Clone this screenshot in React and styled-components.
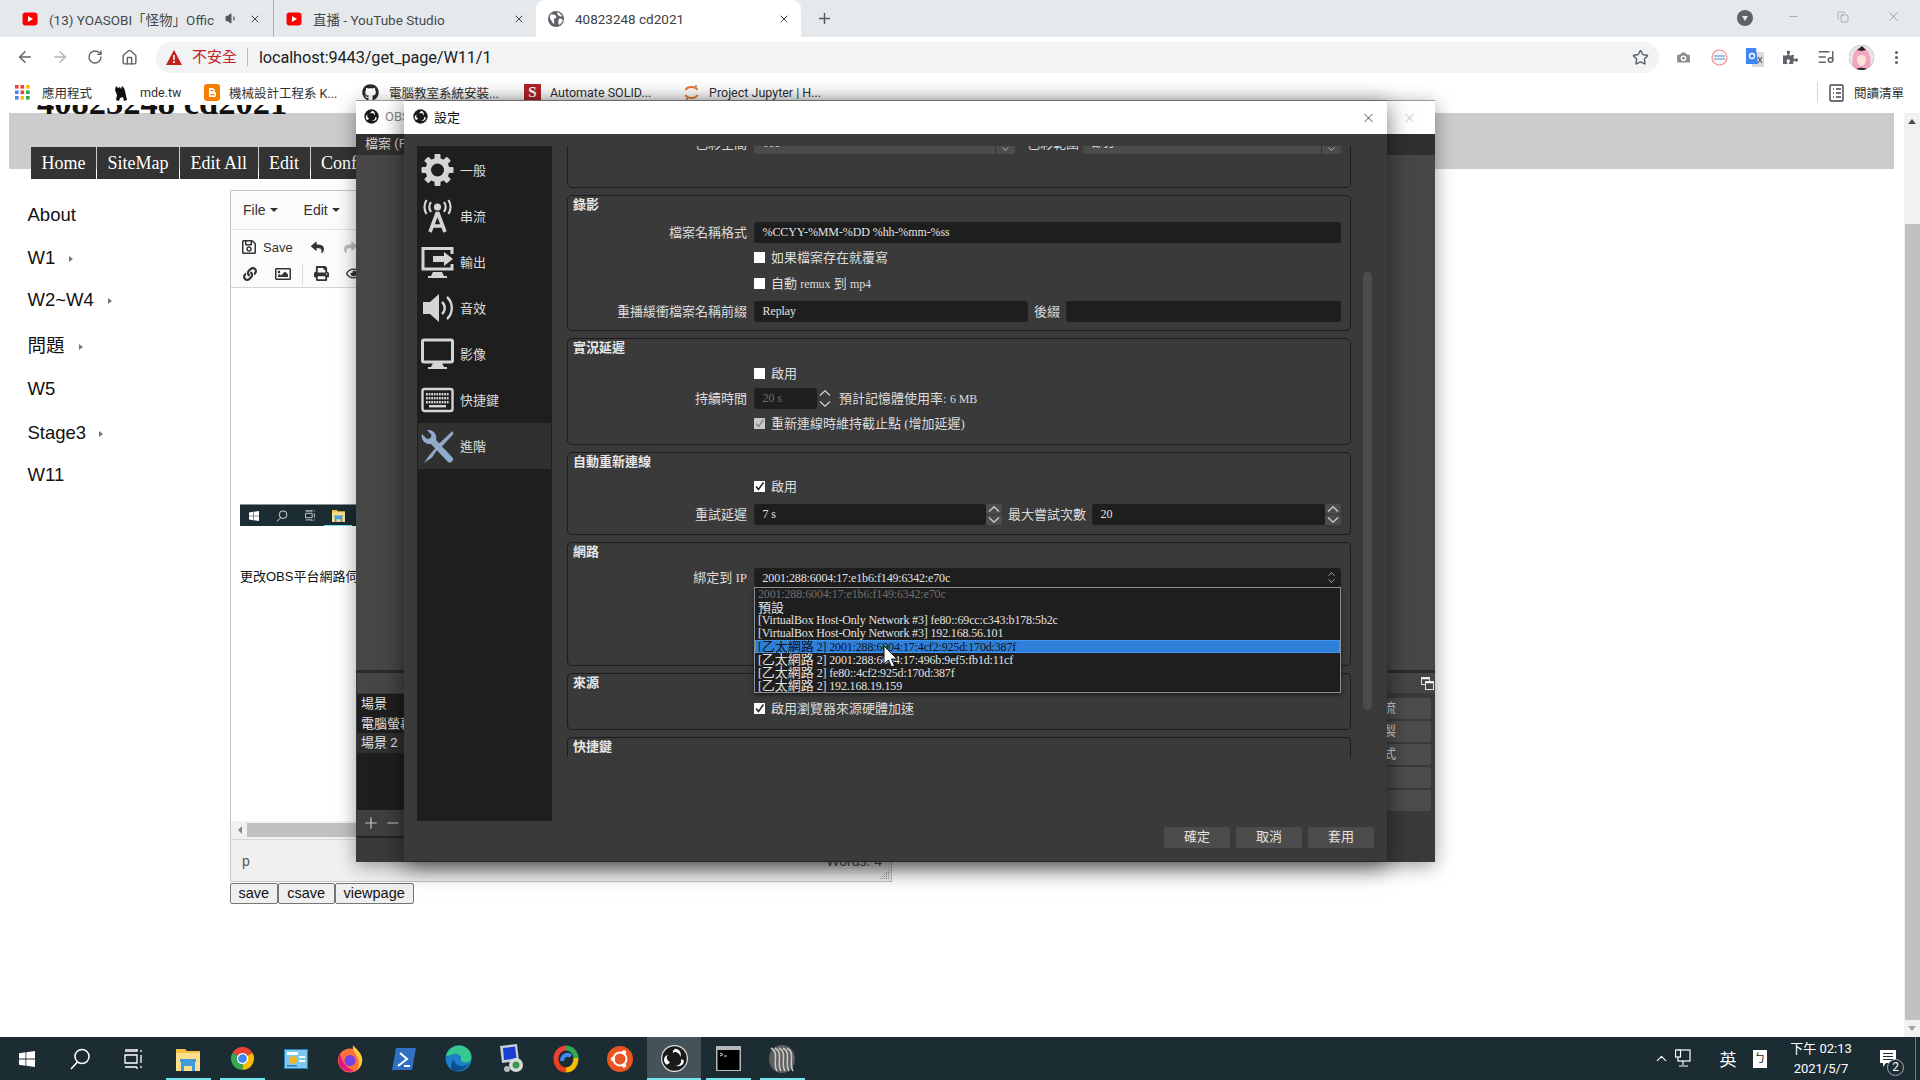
import React from "react";
import styled, { createGlobalStyle } from "styled-components";
import { ArrowLeft, ArrowRight, RotateCw, House, Star, Camera, ListMusic, EllipsisVertical, Plus, X, Minus, Copy, ChevronUp, Volume1 } from "lucide-react";
import { FaRegSave, FaReply, FaShare, FaLink, FaRegImage, FaPrint, FaRegEye, FaGithub, FaPuzzlePiece } from "react-icons/fa";

const SERIF = `"Liberation Serif", "Noto Sans CJK TC", serif`;
const UI = `Roboto, "Noto Sans CJK TC", sans-serif`;
const ARIAL = `"Liberation Sans", "Noto Sans CJK TC", sans-serif`;

const Global = createGlobalStyle`
  html, body { margin: 0; padding: 0; background: #fff; overflow: hidden; }
  * { box-sizing: border-box; }
`;

const Screen = styled.div`
  position: relative; width: 1920px; height: 1080px; overflow: hidden;
  display: flex; flex-direction: column; font-family: ${UI}; background: #fff;
`;

/* ---------- browser chrome ---------- */
const TabStrip = styled.div`
  height: 37px; flex: none; background: #e6e9ec; display: flex; align-items: stretch; padding-left: 10px;
`;
const Tab = styled.div`
  width: ${(p) => p.$w}px; flex: none; display: flex; align-items: center; gap: 11px;
  padding: 0 11px 0 12px; font-size: 13.5px; color: ${(p) => (p.$active ? "#3c4043" : "#45494d")};
  background: ${(p) => (p.$active ? "#fff" : "transparent")};
  border-radius: ${(p) => (p.$active ? "9px 9px 0 0" : "0")};
  border-right: ${(p) => (p.$sep ? "1px solid #a9adb1" : "0")};
`;
const TabTitle = styled.span`
  flex: 1; white-space: nowrap; overflow: hidden; min-width: 0;
`;
const NewTab = styled.div`
  width: 46px; display: flex; align-items: center; justify-content: center; color: #55595d;
`;
const WinControls = styled.div`
  margin-left: auto; display: flex; padding-right: 2px;
`;
const WinBtn = styled.div`
  width: ${(p) => p.$w || 50}px; display: flex; align-items: center; justify-content: center; color: #777;
  padding-bottom: ${(p) => p.$pb || 4}px;
`;
const DropCircle = styled.div`
  width: 16px; height: 16px; border-radius: 50%; background: #5f6368; display: flex; align-items: center; justify-content: center;
  &::after { content: ""; border-left: 3.5px solid transparent; border-right: 3.5px solid transparent; border-top: 5px solid #e6e9ec; }
`;
const Toolbar = styled.div`
  height: 43px; flex: none; background: #fff; display: flex; align-items: center; padding: 0 0 3px 7px;
`;
const NavBtn = styled.div`
  width: 35px; display: flex; align-items: center; justify-content: center; color: ${(p) => (p.$off ? "#b4b6b9" : "#5f6368")};
`;
const AddressBar = styled.div`
  width: 1503px; height: 31px; margin: 0 7px 0 9px; border-radius: 16px; background: #f1f3f4;
  display: flex; align-items: center; padding: 0 10px 0 10px; flex: none;
`;
const NotSecure = styled.span`
  color: #c5221f; font-size: 15px; margin-left: 10px; padding-right: 10px; border-right: 1px solid #b8babd; line-height: 18px;
`;
const Url = styled.span`
  color: #202124; font-size: 16.3px; margin-left: 11px; flex: 1; letter-spacing: -0.1px;
`;
const ExtBtn = styled.div`
  width: 35.5px; display: flex; align-items: center; justify-content: center; color: ${(p) => p.$c || "#5f6368"};
`;
const Avatar = styled.div`
  width: 25px; height: 25px; border-radius: 50%; overflow: hidden; background: #3a3036;
`;
const Bookmarks = styled.div`
  height: 25px; flex: none; background: #fff; display: flex; align-items: center; padding: 0 0 0 15px;
`;
const Bookmark = styled.div`
  width: ${(p) => p.$w}px; flex: none; display: flex; align-items: center; gap: ${(p) => p.$gap || 10}px;
  font-size: 12.5px; color: #2f3133; white-space: nowrap;
`;
const BMIcon = styled.span`
  width: 17px; height: 17px; flex: none; display: flex; align-items: center; justify-content: center; color: #24292e;
`;
const SolidLogo = styled.span`
  width: 17px; height: 17px; flex: none; background: #b3232b; color: #fff; font: bold 15px ${SERIF};
  display: flex; align-items: center; justify-content: center;
`;
const ReadingList = styled.div`
  margin-left: auto; height: 21px; display: flex; align-items: center; border-left: 1px solid #d3d5d8; padding: 0 16px 0 11px; gap: 10px;
  font-size: 12.5px; color: #2f3133;
`;

/* ---------- web page under the windows ---------- */
const Page = styled.div`
  flex: 1; min-height: 0; display: flex; overflow: hidden; background: #fff;
`;
const PageMain = styled.div`
  width: 1904px; flex: none; padding: 8px 10px 0 9px;
`;
const SiteHeader = styled.div`
  display: flow-root; height: 56px; background: #ccc; padding-left: 22px;
`;
const SiteTitle = styled.h1`
  margin: -28px 0 0 6px; height: 34px; font: bold 34.5px/34px ${SERIF}; color: #111; white-space: nowrap;
`;
const SiteNav = styled.div`
  margin-top: 28px; height: 32px; display: flex; gap: 1px;
`;
const SiteNavItem = styled.div`
  background: #333; color: #fff; font: 18px/32px ${SERIF}; padding: 0 10.5px;
`;
const PageBody = styled.div`
  display: flex; margin-top: 21px;
`;
const LeftNav = styled.div`
  width: 221px; flex: none; padding: 14px 0 0 18.5px;
`;
const LeftNavItem = styled.div`
  height: ${(p) => p.$h}px; font: 18.5px/22px ${ARIAL}; color: #111; display: flex; align-items: flex-start;
`;
const Caret = styled.span`
  margin: 9px 0 0 ${(p) => p.$ml || 12}px; border-left: 4px solid #777; border-top: 3.5px solid transparent; border-bottom: 3.5px solid transparent;
`;
const EditorCol = styled.div`
  width: 662px; flex: none;
`;
const Editor = styled.div`
  height: 692px; border: 1px solid #c5c5c5; display: flex; flex-direction: column; background: #fff; font-family: ${ARIAL};
`;
const EditorMenu = styled.div`
  height: 39px; flex: none; background: #fbfbfb; border-bottom: 1px solid #e2e2e2; display: flex; align-items: center; padding-left: 12px; gap: 26px;
  font-size: 14px; color: #333;
`;
const MenuEntry = styled.span`
  display: flex; align-items: center; gap: 4px;
  &::after { content: ""; border-left: 4px solid transparent; border-right: 4px solid transparent; border-top: 4px solid #333; }
`;
const EditorTools = styled.div`
  height: 58px; flex: none; background: #fbfbfb; border-bottom: 1px solid #d5d5d5; display: flex; flex-direction: column; padding-top: 4px;
`;
const ToolRow = styled.div`
  height: 28px; display: flex; align-items: center; padding-left: ${(p) => p.$pl ?? 10}px; color: #333; font-size: 13px;
`;
const ToolBtn = styled.span`
  width: ${(p) => p.$w}px; flex: none; display: flex; align-items: center; gap: 6px; justify-content: ${(p) => (p.$left ? "flex-start" : "center")};
  color: ${(p) => (p.$off ? "#bbb" : "#333")};
`;
const ToolSep = styled.span`
  width: 1px; height: 22px; background: #ddd; flex: none; margin: 0 3px;
`;
const EditorDoc = styled.div`
  flex: 1; min-height: 0; padding: 216px 0 0 9px; font-size: 13px; color: #111; overflow: hidden;
`;
const ShotStrip = styled.div`
  width: 400px; height: 22px; background: #1c2c33; display: flex; align-items: center; padding-left: 0; border-top: 1px solid #8a9297;
`;
const ShotIcon = styled.span`
  width: 28px; flex: none; display: flex; justify-content: center; position: relative; height: 21px; align-items: center;
  border-bottom: ${(p) => (p.$open ? "1px solid #76e4ee" : "0")};
`;
const DocText = styled.p`
  margin: 43px 0 0; line-height: 16px; white-space: nowrap;
`;
const HScroll = styled.div`
  height: 18px; flex: none; background: #f1f1f1; display: flex; align-items: center; padding-left: 7px;
  &::before { content: ""; border-right: 4px solid #888; border-top: 4px solid transparent; border-bottom: 4px solid transparent; }
`;
const HThumb = styled.div`
  height: 14px; flex: 1; margin: 0 18px 0 5px; background: #c1c1c1;
`;
const StatusBar = styled.div`
  height: 42px; flex: none; background: #f0f0f0; border-top: 1px solid #d5d5d5; display: flex; align-items: center; justify-content: space-between;
  padding: 0 9px 0 11px; font-size: 14px; color: #555; position: relative;
`;
const Grip = styled.svg`
  position: absolute; right: 1px; bottom: 1px;
`;
const FormButtons = styled.div`
  display: flex; margin-top: 1px;
`;
const FormButton = styled.div`
  height: 21px; padding: 0 ${(p) => p.$p || 8}px; border: 1px solid #767676; border-radius: 2px; background: #efefef;
  font: 14.5px/19px ${ARIAL}; color: #111;
`;
const PageScroll = styled.div`
  width: 16px; flex: none; margin-top: 8px; background: #f1f1f1; display: flex; flex-direction: column; align-items: center;
`;
const ScrollArrow = styled.div`
  height: 17px; flex: none; display: flex; align-items: center; margin-top: ${(p) => (p.$down ? "auto" : "0")};
  &::after { content: ""; border-left: 4px solid transparent; border-right: 4px solid transparent;
    ${(p) => (p.$down ? "border-top: 5px solid #a3a3a3;" : "border-bottom: 5px solid #505050;")} }
`;
const PageThumb = styled.div`
  width: 15px; height: 796px; margin-top: 94px; background: #c1c1c1; flex: none;
`;

/* ---------- OBS windows (free canvas) ---------- */
const ObsMain = styled.div`
  position: absolute; left: 356px; top: 100px; width: 1079px; height: 762px; background: #3a3a3a;
  display: flex; flex-direction: column; box-shadow: 0 4px 18px rgba(0,0,0,.38); border-top: 1px solid #9a9a9a;
`;
const WinTitle = styled.div`
  height: 33px; flex: none; background: #fff; display: flex; align-items: center; padding: 0 0 2px ${(p) => p.$pl || 8}px; gap: 6px;
  font-size: 13px; color: ${(p) => p.$c || "#111"}; position: relative;
`;
const WinClose = styled.span`
  position: absolute; right: ${(p) => p.$r}px; top: 50%; transform: translateY(-50%); display: flex; color: ${(p) => p.$c};
`;
const ObsMenu = styled.div`
  height: 21px; flex: none; background: #303030; color: #d0d0d0; font-size: 13px; line-height: 19px; padding-left: 9px;
`;
const ObsPreview = styled.div`
  flex: 1; min-height: 0; background: #474747; border-bottom: 3px solid #2b2b2b;
`;
const ObsDock = styled.div`
  height: 189px; flex: none; display: flex; justify-content: space-between; padding: 0 0 0 1px;
`;
const DockLeft = styled.div`
  width: 48px; display: flex; flex-direction: column;
`;
const DockHeader = styled.div`
  height: 20px; flex: none; background: #464646; display: flex; justify-content: flex-end; align-items: center; padding-right: 1px;
`;
const SceneList = styled.div`
  height: 116px; flex: none; margin-top: 1px; background: #1e1e1e; color: #e4e4e4; font-size: 13px; overflow: hidden;
`;
const Scene = styled.div`
  height: 19.5px; line-height: 19px; padding-left: 4px; white-space: nowrap; background: ${(p) => (p.$sel ? "#2f2f2f" : "transparent")};
`;
const SceneTools = styled.div`
  height: 28px; flex: none; background: #3f3f3f; border-bottom: 2px solid #232323; display: flex; align-items: center; gap: 4px; padding-left: 5px; color: #c8c8c8;
`;
const DockRight = styled.div`
  width: 49px; display: flex; flex-direction: column;
`;
const ControlBtns = styled.div`
  display: flex; flex-direction: column; gap: 2px; margin-top: 5px; padding-right: 4px;
`;
const ControlBtn = styled.div`
  height: 21px; background: #4c4c4c; border-radius: 3px; color: #d8d8d8; font-size: 13px; line-height: 20px; overflow: hidden; white-space: nowrap; text-indent: -3px;
`;

const Settings = styled.div`
  position: absolute; left: 404px; top: 100px; width: 983px; height: 761px; background: #3a3a3a;
  display: flex; flex-direction: column; box-shadow: 0 6px 22px rgba(0,0,0,.55); border-top: 1px solid #6a6a6a;
`;
const SetBody = styled.div`
  display: flex; padding: 12px 0 0 13px; height: 687px; flex: none;
`;
const SideBar = styled.div`
  width: 135px; height: 675px; flex: none; background: #1e1e1e; padding: 1px 1px 0;
`;
const SideItem = styled.div`
  height: 46px; display: flex; align-items: center; gap: 6px; padding-left: 3px; color: #dcdcdc; font-size: 13px;
  background: ${(p) => (p.$active ? "#303030" : "transparent")};
`;
const SideLabel = styled.span`
  margin-top: -2px;
`;
const SideIcon = styled.svg`
  width: 33px; height: 34px; flex: none;
`;
const ScrollArea = styled.div`
  display: flex; margin-left: 15px; height: 611px; align-items: flex-start;
`;
const Groups = styled.div`
  width: 784px; height: 611px; overflow: hidden; display: flex; flex-direction: column; gap: 7px;
  font-family: ${SERIF}; font-size: 13px; color: #dcdcdc;
`;
const Group = styled.div`
  height: ${(p) => p.$h}px; flex: none; position: relative; border: 1px solid #1c1c1c; border-radius: 5px;
  margin-top: ${(p) => p.$mt || 0}px; padding-top: ${(p) => p.$pt || 0}px;
`;
const GroupTitle = styled.div`
  height: 20px; line-height: 18px; padding-left: 5px; font-weight: 700; color: #e6e6e6;
`;
const Row = styled.div`
  height: ${(p) => p.$h || 21}px; margin-top: ${(p) => p.$mt || 0}px; display: grid; grid-template-columns: 179px 587px; grid-template-rows: 100%; column-gap: 7px; align-items: center; position: relative;
`;
const Label = styled.div`
  text-align: right; white-space: nowrap; margin-top: -2px;
`;
const Field = styled.div`
  display: flex; align-items: center; gap: ${(p) => p.$gap || 0}px; min-width: 0; height: 100%;
`;
const FieldText = styled.span`
  white-space: nowrap; margin: -2px ${(p) => p.$mr || 0}px 0 ${(p) => p.$ml || 0}px;
`;
const Input = styled.div`
  height: 100%; flex: ${(p) => (p.$w ? "none" : 1)}; width: ${(p) => (p.$w ? `${p.$w}px` : "auto")}; background: ${(p) => p.$bg || "#1e1e1e"};
  border-radius: 3px; padding-left: 8.5px; line-height: 20px; font-size: 12px; letter-spacing: ${(p) => p.$ls || "-0.1px"}; color: ${(p) => p.$c || "#e2e2e2"}; white-space: nowrap; overflow: hidden; position: relative;
`;
const Spin = styled.div`
  width: 16px; height: 100%; flex: none; display: flex; flex-direction: column; gap: 1px; color: #d0d0d0;
`;
const SpinPart = styled.div`
  flex: 1; min-height: 0; display: flex; align-items: center; justify-content: center; background: ${(p) => (p.$off ? "transparent" : "#4c4c4c")}; border-radius: 2px; overflow: hidden;
`;
const ComboArrow = styled.div`
  position: absolute; right: 0; top: 0; bottom: 0; width: 20px; display: flex; align-items: flex-end; justify-content: center; color: #c4c4c4; padding-bottom: 3px;
  border-left: ${(p) => (p.$sep ? "1px solid #333" : "0")};
`;
const ComboDouble = styled.div`
  position: absolute; right: 4px; top: 0; bottom: 0; width: 12px; display: flex; flex-direction: column; align-items: center; justify-content: center; gap: 3px; color: #bbb;
`;
const Check = styled.div`
  display: flex; align-items: center; gap: 6px; white-space: nowrap; padding-bottom: 2px;
`;
const Box = styled.span`
  width: 11px; height: 11px; margin-top: 2px; flex: none; background: ${(p) => (p.$off ? "#c9c9c9" : "#fff")}; display: flex; align-items: center; justify-content: center;
`;
const Lat = styled.span`
  font-size: 12px; letter-spacing: -0.1px;
`;
const Dropdown = styled.div`
  position: absolute; left: 186px; top: 100%; width: 587px; height: 106px; z-index: 3; background: #1e1e1e; border: 1px solid #8a8f94;
  box-shadow: 0 2px 4px rgba(0,0,0,.5); font-size: 12px; letter-spacing: -0.16px;
`;
const DropItem = styled.div`
  height: 13px; line-height: 13px; padding-left: 3px; white-space: nowrap; color: ${(p) => (p.$sel ? "#121212" : p.$dim ? "#707070" : "#e2e2e2")};
  background: ${(p) => (p.$sel ? "#2d7fd8" : "transparent")}; outline: ${(p) => (p.$sel ? "1px dotted #d98a3a" : "none")}; outline-offset: -1px;
`;
const Zh = styled.span`
  font-size: 13px; letter-spacing: 0;
`;
const Pointer = styled.svg`
  position: absolute; left: 883px; top: 645px; z-index: 5;
`;
const VScroll = styled.div`
  width: 9px; height: 438px; margin: 126px 0 0 12px; background: #4c4c4c; border-radius: 5px; flex: none;
`;
const SetFooter = styled.div`
  display: flex; justify-content: flex-end; gap: 6px; padding: 6px 13px 0 0;
`;
const FootBtn = styled.div`
  width: 66px; height: 21px; border-radius: 3px; background: #4c4c4c; color: #e2e2e2; font-size: 13px; line-height: 20px; text-align: center;
`;

/* ---------- taskbar ---------- */
const Taskbar = styled.div`
  height: 43px; flex: none; background: #1c2c33; display: flex; align-items: stretch; position: relative;
`;
const TaskBtn = styled.div`
  width: ${(p) => p.$w || 54}px; flex: none; display: flex; align-items: center; justify-content: center; position: relative;
  background: ${(p) => (p.$active ? "#44535a" : "transparent")}; color: #fff;
  &::after {
    content: ""; position: absolute; bottom: 0; height: 2px; background: #76e4ee; display: ${(p) => (p.$open ? "block" : "none")};
    left: ${(p) => (p.$active ? 0 : 5)}px; right: ${(p) => (p.$active ? 0 : 4)}px;
  }
`;
const Tray = styled.div`
  margin-left: auto; display: flex; align-items: center; color: #fff; font-size: 14px; padding-right: 4px;
`;
const TrayCell = styled.div`
  width: ${(p) => p.$w}px; margin-left: ${(p) => p.$ml || 0}px; flex: none; display: flex; align-items: center; justify-content: center; position: relative;
`;
const ImeBox = styled.span`
  width: 14px; height: 18px; background: #fff; color: #111; font-size: 11px; line-height: 18px; text-align: center;
`;
const ImeChar = styled.span`
  font-size: 17px; color: #fff; font-family: ${UI};
`;
const Clock = styled.div`
  text-align: center; font-size: 13px; line-height: 20px; color: #fff; white-space: nowrap;
`;
const Badge = styled.span`
  position: absolute; right: 4px; bottom: -8px; width: 17px; height: 17px; border-radius: 50%; background: #1c2c33; border: 1px solid #aab; font-size: 12px; line-height: 15px; text-align: center; color: #fff;
`;
const DesktopEdge = styled.div`
  width: 1px; height: 100%; margin-left: 7px; background: #6f7b80; align-self: stretch;
`;

/* ---------- drawings ---------- */
const YT = () => (
  <svg width="16" height="16" viewBox="0 0 16 16" style={{ flex: "none" }}><rect x="0.5" y="1.5" width="15" height="13" rx="3" fill="#f00" /><path d="M6 5l5 3-5 3z" fill="#fff" /></svg>
);
const Globe = () => (
  <svg width="16" height="16" viewBox="0 0 16 16" style={{ flex: "none" }}><circle cx="8" cy="8" r="8" fill="#5f6368" /><path d="M3 3c2 1 4 0 5 2s-1 2-2 3 1 3 0 5c-2-1-2-3-3-4S1 6 3 3zM10 1c1 1 3 2 4 4-1 1-3 0-4-1s-1-2 0-3zM11 8c1-1 3 0 4 1-1 2-2 4-4 5-1-2-1-4 0-6z" fill="#fff" /></svg>
);
const ObsLogo = ({ size = 16, ring }) => (
  <svg width={size} height={size} viewBox="0 0 24 24" style={{ flex: "none" }}>
    <circle cx="12" cy="12" r="11.5" fill="#1a1a1a" stroke={ring ? "#d8d8d8" : "none"} strokeWidth={ring ? 1.2 : 0} />
    <path d="M12.5 3.4a5 5 0 0 1 4.6 7.2 4.2 4.2 0 0 0-6.7-3.4 4 4 0 0 1 2.1-3.8zM20.5 14a5 5 0 0 1-7.7 4 4.2 4.2 0 0 0 5-5.3 4 4 0 0 1 2.7 1.3zM5 17.5a5 5 0 0 1 1-8.9 4.2 4.2 0 0 0 2 6.5 4 4 0 0 1-3 2.4z" fill="#fff" />
  </svg>
);
const Apps = () => {
  const c = ["#ea4335", "#ea4335", "#fbbc04", "#4285f4", "#ea4335", "#34a853", "#4285f4", "#fbbc04", "#34a853"];
  return (
    <svg width="15" height="15" viewBox="0 0 15 15">
      {c.map((f, i) => <rect key={i} x={(i % 3) * 5.5} y={Math.floor(i / 3) * 5.5} width="3.6" height="3.6" fill={f} />)}
    </svg>
  );
};
const Gear = () => (
  <SideIcon viewBox="0 0 33 34">
    {[0, 45, 90, 135].map((a) => <rect key={a} x="13.5" y="1" width="6" height="32" rx="1" fill="#d4d4d4" transform={`rotate(${a} 16.5 17)`} />)}
    <circle cx="16.5" cy="17" r="12" fill="#d4d4d4" /><circle cx="16.5" cy="17" r="6.5" fill="#1e1e1e" />
  </SideIcon>
);
const Antenna = () => (
  <SideIcon viewBox="0 0 33 34" fill="none" stroke="#d4d4d4">
    <circle cx="16.5" cy="8" r="3.6" fill="#d4d4d4" stroke="none" />
    <path d="M10 3a9 9 0 0 0 0 10M23 3a9 9 0 0 1 0 10M5.5 1a14 14 0 0 0 0 14M27.5 1a14 14 0 0 1 0 14" strokeWidth="2.2" />
    <path d="M16.5 13L9 33M16.5 13L24 33M11.5 27h10" strokeWidth="3.6" />
  </SideIcon>
);
const Output = () => (
  <SideIcon viewBox="0 0 33 34" fill="none">
    <path d="M31 9V3.5H2V24h29v-5" stroke="#d4d4d4" strokeWidth="3" />
    <path d="M12 27h9l2 4h3v2H7v-2h3z" fill="#d4d4d4" />
    <path d="M12 11h11V7l9 7-9 7v-4H12z" fill="#d4d4d4" />
  </SideIcon>
);
const Speaker = () => (
  <SideIcon viewBox="0 0 33 34" fill="none">
    <path d="M2 11h7l9-8v28l-9-8H2z" fill="#d4d4d4" />
    <path d="M21 11a8 8 0 0 1 0 12M26 6a15 15 0 0 1 0 22" stroke="#d4d4d4" strokeWidth="2.4" />
  </SideIcon>
);
const Monitor = () => (
  <SideIcon viewBox="0 0 33 34" fill="none">
    <rect x="1.5" y="3" width="30" height="22" rx="1.5" stroke="#d4d4d4" strokeWidth="3" />
    <path d="M12 26h9l2 4h3v2H7v-2h3z" fill="#d4d4d4" />
  </SideIcon>
);
const Keyboard = () => (
  <SideIcon viewBox="0 0 33 34" fill="none">
    <rect x="1.5" y="6" width="30" height="22" rx="2" stroke="#d4d4d4" strokeWidth="2.4" />
    {[10, 14, 18].map((y, r) => Array.from({ length: 9 }).map((_, i) => <rect key={`${r}${i}`} x={5 + i * 2.6} y={y} width="1.8" height="2.4" fill="#d4d4d4" />))}
    <rect x="8" y="22" width="17" height="2.4" fill="#d4d4d4" />
  </SideIcon>
);
const Tools = () => (
  <SideIcon viewBox="0 0 33 34" fill="#8fabc9">
    <path d="M1 5l5 5 3.500-.8L10.500 6l-4.500-5a8 8 0 0 1 9 10L31 28a3 3 0 0 1-4.500 4.500L10 15A8 8 0 0 1 1 5z" />
    <path d="M31.500 2l1 3-13 14-3-3zM15.500 18l1.500 1.500-6 9-8 5.500 5.500-8z" />
  </SideIcon>
);

const Win = ({ s = 16 }) => (
  <svg width={s} height={s} viewBox="0 0 16 16" fill="#fff"><path d="M0 2.300l6.500-1v6.300H0zM7.300 1.200L16 0v7.600H7.300zM0 8.400h6.500v6.300L0 13.700zM7.300 8.400H16V16l-8.700-1.200z" /></svg>
);
const Search = ({ s = 22 }) => (
  <svg width={s} height={s} viewBox="0 0 22 22" fill="none" stroke="#fff" strokeWidth="1.500"><circle cx="13" cy="8.500" r="7" /><path d="M8.500 14L2 21" /></svg>
);
const TaskView = ({ s = 20 }) => (
  <svg width={s} height={s} viewBox="0 0 20 20" fill="none" stroke="#fff" strokeWidth="1.300"><path d="M1 0h12M13 0v2H1M1 18h12M13 20v-2M1 6h12v8H1zM17 1v2M17 6v8M17 17v2" /></svg>
);
const Folder = ({ s = 24 }) => (
  <svg width={s} height={s} viewBox="0 0 24 24"><path d="M0 2h9l2 2h13v20H0z" fill="#f5c243" /><rect y="6" width="24" height="18" fill="#fbdf8c" /><path d="M5 24V15h14v9h-3v-5H8v5z" fill="#3e9be0" /><path d="M4 12h16v3H4z" fill="#3e9be0" /></svg>
);
const Chrome = ({ s = 25 }) => (
  <svg width={s} height={s} viewBox="0 0 24 24">
    <path d="M12 12L2.470 6.500A11 11 0 0 1 21.530 6.500z" fill="#ea4335" />
    <path d="M12 12L21.530 6.500A11 11 0 0 1 12 23z" fill="#fbbc04" />
    <path d="M12 12L12 23A11 11 0 0 1 2.470 6.500z" fill="#34a853" />
    <circle cx="12" cy="12" r="5.400" fill="#fff" /><circle cx="12" cy="12" r="4.200" fill="#4285f4" />
  </svg>
);
const ControlPanel = () => (
  <svg width="24" height="24" viewBox="0 0 24 24"><rect x="0.500" y="2.500" width="23" height="19" fill="#7cc8ee" stroke="#2a80b9" /><rect x="3" y="5" width="11" height="3" fill="#fff" /><circle cx="9" cy="13" r="4" fill="#f0b429" /><rect x="15" y="9" width="6" height="2" fill="#fff" /><rect x="15" y="13" width="6" height="2" fill="#fff" /><rect x="3" y="18" width="10" height="1.500" fill="#2a80b9" /></svg>
);
const Firefox = () => (
  <svg width="26" height="28" viewBox="0 0 26 28"><circle cx="13" cy="15.500" r="12" fill="#ff7139" /><path d="M16 0c2 3 8 7 9 13 1 4-1 9-5 12 3-6 2-11-1-15-1-3-4-5-3-10z" fill="#ffcb3d" /><circle cx="13" cy="15.500" r="5.500" fill="#7542e5" /><path d="M3 8c1 6 5 15 14 18-6 2-13-1-15-7-1-4 0-8 1-11z" fill="#e31587" /></svg>
);
const PowerShell = () => (
  <svg width="26" height="26" viewBox="0 0 26 26"><path d="M5 2h20l-4 22H1z" fill="#2f6fc4" /><path d="M9 7l7 6-9 7" fill="none" stroke="#fff" strokeWidth="2" /><path d="M13 20h6" stroke="#fff" strokeWidth="2" /></svg>
);
const Edge = () => (
  <svg width="27" height="27" viewBox="0 0 27 27"><circle cx="13.500" cy="13.500" r="13" fill="#1c80c8" /><path d="M1 11C3 3 10 0 15 .5c6 .5 11.500 5 11.500 11.500 0 4-3 5.500-6 5.500S15 16 16 13c.5-2-3-5-7-4s-6 2-8 2z" fill="#35c88f" /><path d="M9 14c0 5 5 8 10 7 2-.5 4-1.500 5-3-2 5-7 8-12 8-3 0-5-1-6-3 0-4 1-7 3-9z" fill="#0d4f8c" /></svg>
);
const Moba = () => (
  <svg width="26" height="29" viewBox="0 0 26 29"><path d="M1 2l17-2 2 17-17 2z" fill="#c6ced6" /><path d="M4 4l12-1.500 1.500 12L5 16z" fill="#1a3fd0" /><circle cx="17" cy="21" r="7" fill="#d8dcd8" /><circle cx="17" cy="21" r="3.500" fill="#3a9a4a" /><circle cx="8" cy="25" r="3" fill="#bbb" /></svg>
);
const Colorful = () => (
  <svg width="26" height="28" viewBox="0 0 26 28" fill="none" strokeWidth="5"><path d="M3 14C3 7 8 3 13 3" stroke="#ea4335" /><path d="M13 3c6 0 10 5 10 10" stroke="#34a853" /><path d="M23 13c0 7-4 12-10 12" stroke="#fbbc04" /><path d="M13 25C7 25 3 20 3 14" stroke="#e8411f" /><path d="M9 16c0-5 5-8 9-5" stroke="#4285f4" strokeWidth="4" /></svg>
);
const Ubuntu = () => (
  <svg width="26" height="26" viewBox="0 0 26 26" fill="none"><circle cx="13" cy="13" r="13" fill="#e95420" /><circle cx="13" cy="13" r="6.500" stroke="#fff" strokeWidth="2" /><circle cx="6" cy="13" r="2.200" fill="#fff" /><circle cx="17" cy="6.500" r="2.200" fill="#fff" /><circle cx="17" cy="19.500" r="2.200" fill="#fff" /></svg>
);
const Terminal = () => (
  <svg width="25" height="25" viewBox="0 0 25 25"><rect width="25" height="25" fill="#b4b9bc" /><rect x="1.500" y="4" width="22" height="20" fill="#000" /><path d="M4 7l3 1.500L4 10M8 10h3" stroke="#ddd" fill="none" /></svg>
);
const Sphere = () => (
  <svg width="26" height="28" viewBox="0 0 26 28" fill="none"><ellipse cx="13" cy="14" rx="13" ry="14" fill="#5d5d5d" />{[5, 9, 13, 17, 21].map((x) => <path key={x} d={`M${x - 3} 3C${x + 6} 8 ${x - 2} 18 ${x + 3} 26`} stroke="#c9c9c9" strokeWidth="1.600" />)}</svg>
);

const Tick = ({ c = "#222" }) => (
  <svg width="11" height="11" viewBox="0 0 11 11" fill="none"><path d="M2 5.500l2.500 3L9.500 1.500" stroke={c} strokeWidth="1.500" /></svg>
);
const Chev = ({ up, w = 12, h = 6 }) => (
  <svg width={w} height={h} viewBox="0 0 12 6" fill="none" stroke="currentColor" strokeWidth="1.300" preserveAspectRatio="none">
    <path d={up ? "M1 5.500L6 .8l5 4.700" : "M1 .5l5 4.700L11 .5"} />
  </svg>
);
const SpinArrows = ({ off }) => (
  <Spin>
    <SpinPart $off={off}><Chev up /></SpinPart>
    <SpinPart $off={off}><Chev /></SpinPart>
  </Spin>
);

const tabsX = 12;

export default function App() {
  return (
    <>
      <Global />
      <Screen>
        <TabStrip>
          <Tab $w={264} $sep>
            <YT />
            <TabTitle>(13) YOASOBI「怪物」Offic</TabTitle>
            <Volume1 size={13} fill="#555" color="#555" />
            <X size={tabsX} style={{ marginRight: 1 }} />
          </Tab>
          <Tab $w={262}>
            <YT />
            <TabTitle>直播 - YouTube Studio</TabTitle>
            <X size={tabsX} />
          </Tab>
          <Tab $w={265} $active>
            <Globe />
            <TabTitle>40823248 cd2021</TabTitle>
            <X size={tabsX} />
          </Tab>
          <NewTab><Plus size={17} strokeWidth={2} /></NewTab>
          <WinControls>
            <WinBtn $w={46} $pb={1}><DropCircle /></WinBtn>
            <WinBtn><Minus size={13} strokeWidth={1} /></WinBtn>
            <WinBtn><Copy size={12} strokeWidth={1} /></WinBtn>
            <WinBtn><X size={15} strokeWidth={1} /></WinBtn>
          </WinControls>
        </TabStrip>

        <Toolbar>
          <NavBtn><ArrowLeft size={18} /></NavBtn>
          <NavBtn $off><ArrowRight size={18} /></NavBtn>
          <NavBtn><RotateCw size={16} /></NavBtn>
          <NavBtn><House size={17} /></NavBtn>
          <AddressBar>
            <svg width="16" height="15" viewBox="0 0 16 15"><path d="M8 0l8 15H0z" fill="#c5221f" /><path d="M7.200 5h1.600v5H7.200zM7.200 11h1.600v2H7.200z" fill="#fff" /></svg>
            <NotSecure>不安全</NotSecure>
            <Url>localhost:9443/get_page/W11/1</Url>
            <Star size={17} color="#5f6368" />
          </AddressBar>
          <ExtBtn $c="#8a8d90"><Camera size={17} fill="#8a8d90" color="#fff" /></ExtBtn>
          <ExtBtn>
            <svg width="17" height="17" viewBox="0 0 17 17"><circle cx="8.500" cy="8.500" r="7.500" fill="#f4f7fb" stroke="#ef8f8f" strokeWidth="1.200" /><path d="M3 7h11M3 10h11" stroke="#8ab0d8" strokeWidth="1.300" /></svg>
          </ExtBtn>
          <ExtBtn>
            <svg width="18" height="19" viewBox="0 0 18 19"><rect x="6" y="4" width="12" height="15" fill="#d6dadf" /><path d="M0 0h10l2 16H0z" fill="#4285f4" /><circle cx="6" cy="8" r="2.500" fill="none" stroke="#fff" strokeWidth="1.300" /><path d="M12 9l4 6M16 9l-4 6" stroke="#5f6368" strokeWidth="1.200" /></svg>
          </ExtBtn>
          <ExtBtn><FaPuzzlePiece size={15} /></ExtBtn>
          <ExtBtn><ListMusic size={18} /></ExtBtn>
          <ExtBtn>
            <Avatar>
              <svg width="25" height="25" viewBox="0 0 25 25"><rect width="25" height="25" fill="#ebe4e8" /><path d="M4 25C2 12 5 3 12.500 3S23 12 21 25z" fill="#f0a6bd" /><path d="M8 13c1-4 8-4 9 0 0 5-2 8-4.500 8S8 18 8 13z" fill="#fbe2dc" /><path d="M6 25c2-3 11-3 13 0z" fill="#2a2328" /><path d="M8 5l5-4 4 4-4 1z" fill="#2a2328" /></svg>
            </Avatar>
          </ExtBtn>
          <ExtBtn><EllipsisVertical size={17} strokeWidth={2.4} /></ExtBtn>
        </Toolbar>

        <Bookmarks>
          <Bookmark $w={98} $gap={12}><Apps /><span>應用程式</span></Bookmark>
          <Bookmark $w={90} $gap={10}>
            <BMIcon><svg width="13" height="16" viewBox="0 0 13 16"><path d="M1 1l2 2 2-1 1 2 1-3 2 2 1 3 2 9-3 1-1-4-3 1-1 3-3-1 1-5-2-5z" fill="#111" /></svg></BMIcon>
            <span>mde.tw</span>
          </Bookmark>
          <Bookmark $w={159} $gap={9}>
            <BMIcon><svg width="16" height="17" viewBox="0 0 16 17"><rect width="16" height="17" rx="3" fill="#f57d00" /><path d="M5 4h4l2 2v2l1 1v3l-1 1H5z" fill="#fff" /><rect x="6.500" y="6" width="3" height="1.300" fill="#f57d00" /><rect x="6.500" y="10" width="4" height="1.300" fill="#f57d00" /></svg></BMIcon>
            <span>機械設計工程系 K...</span>
          </Bookmark>
          <Bookmark $w={162} $gap={10}><BMIcon><FaGithub size={17} /></BMIcon><span>電腦教室系統安裝...</span></Bookmark>
          <Bookmark $w={159} $gap={9}><SolidLogo>S</SolidLogo><span>Automate SOLID...</span></Bookmark>
          <Bookmark $w={159} $gap={9}>
            <BMIcon><svg width="15" height="17" viewBox="0 0 15 17" fill="none"><path d="M1.500 6c2-4 10-4 12 0M1.500 11c2 4 10 4 12 0" stroke="#f37726" strokeWidth="1.800" /><circle cx="12" cy="2" r="1" fill="#888" /><circle cx="3" cy="15" r="1" fill="#888" /></svg></BMIcon>
            <span>Project Jupyter | H...</span>
          </Bookmark>
          <ReadingList><svg width="15" height="18" viewBox="0 0 15 18" fill="none" stroke="#444" strokeWidth="1.400"><rect x="1" y="1" width="13" height="16" rx="1" /><path d="M4 5h1M7 5h5M4 9h1M7 9h5M4 13h1M7 13h5" /></svg><span>閱讀清單</span></ReadingList>
        </Bookmarks>

        <Page>
          <PageMain>
            <SiteHeader>
              <SiteTitle>40823248 cd2021</SiteTitle>
              <SiteNav>
                <SiteNavItem>Home</SiteNavItem>
                <SiteNavItem>SiteMap</SiteNavItem>
                <SiteNavItem>Edit All</SiteNavItem>
                <SiteNavItem>Edit</SiteNavItem>
                <SiteNavItem>Config</SiteNavItem>
              </SiteNav>
            </SiteHeader>
            <PageBody>
              <LeftNav>
                <LeftNavItem $h={43}>About</LeftNavItem>
                <LeftNavItem $h={42}>W1<Caret $ml={14} /></LeftNavItem>
                <LeftNavItem $h={46}>W2~W4<Caret $ml={14} /></LeftNavItem>
                <LeftNavItem $h={43}>問題<Caret $ml={14} /></LeftNavItem>
                <LeftNavItem $h={44}>W5</LeftNavItem>
                <LeftNavItem $h={42}>Stage3<Caret $ml={13} /></LeftNavItem>
                <LeftNavItem $h={42}>W11</LeftNavItem>
              </LeftNav>
              <EditorCol>
                <Editor>
                  <EditorMenu>
                    <MenuEntry>File</MenuEntry>
                    <MenuEntry>Edit</MenuEntry>
                  </EditorMenu>
                  <EditorTools>
                    <ToolRow>
                      <ToolBtn $w={66} $left><FaRegSave size={16} /><span>Save</span></ToolBtn>
                      <ToolBtn $w={20}><FaReply size={13} /></ToolBtn>
                      <ToolBtn $w={46} $off><FaShare size={13} /></ToolBtn>
                    </ToolRow>
                    <ToolRow $pl={2}>
                      <ToolBtn $w={33}><FaLink size={14} /></ToolBtn>
                      <ToolBtn $w={33}><FaRegImage size={16} /></ToolBtn>
                      <ToolSep />
                      <ToolBtn $w={30}><FaPrint size={15} /></ToolBtn>
                      <ToolBtn $w={34}><FaRegEye size={15} /></ToolBtn>
                    </ToolRow>
                  </EditorTools>
                  <EditorDoc>
                    <ShotStrip>
                      <ShotIcon><Win s={10} /></ShotIcon>
                      <ShotIcon><Search s={12} /></ShotIcon>
                      <ShotIcon><TaskView s={11} /></ShotIcon>
                      <ShotIcon $open><Folder s={13} /></ShotIcon>
                    </ShotStrip>
                    <DocText>更改OBS平台網路伺服器</DocText>
                  </EditorDoc>
                  <HScroll><HThumb /></HScroll>
                  <StatusBar>
                    <span>p</span>
                    <span>Words: 4</span>
                    <Grip width="10" height="10" viewBox="0 0 10 10" fill="#999"><path d="M8 0h1v1H8zM6 2h1v1H6zM8 2h1v1H8zM4 4h1v1H4zM6 4h1v1H6zM8 4h1v1H8zM2 6h1v1H2zM4 6h1v1H4zM6 6h1v1H6zM8 6h1v1H8zM0 8h1v1H0zM2 8h1v1H2zM4 8h1v1H4zM6 8h1v1H6zM8 8h1v1H8z" /></Grip>
                  </StatusBar>
                </Editor>
                <FormButtons>
                  <FormButton $p={7.5}>save</FormButton>
                  <FormButton $p={8.5}>csave</FormButton>
                  <FormButton>viewpage</FormButton>
                </FormButtons>
              </EditorCol>
            </PageBody>
          </PageMain>
          <PageScroll>
            <ScrollArrow />
            <PageThumb />
            <ScrollArrow $down />
          </PageScroll>
        </Page>

        <Taskbar>
          <TaskBtn $w={53}><Win s={16} /></TaskBtn>
          <TaskBtn><Search /></TaskBtn>
          <TaskBtn><TaskView /></TaskBtn>
          <TaskBtn $open><Folder /></TaskBtn>
          <TaskBtn $open><Chrome /></TaskBtn>
          <TaskBtn><ControlPanel /></TaskBtn>
          <TaskBtn><Firefox /></TaskBtn>
          <TaskBtn><PowerShell /></TaskBtn>
          <TaskBtn><Edge /></TaskBtn>
          <TaskBtn><Moba /></TaskBtn>
          <TaskBtn><Colorful /></TaskBtn>
          <TaskBtn><Ubuntu /></TaskBtn>
          <TaskBtn $active $open><ObsLogo size={27} ring /></TaskBtn>
          <TaskBtn $open><Terminal /></TaskBtn>
          <TaskBtn $open><Sphere /></TaskBtn>
          <Tray>
            <TrayCell $w={22}><ChevronUp size={17} strokeWidth={1.500} /></TrayCell>
            <TrayCell $w={22}>
              <svg width="16" height="20" viewBox="0 0 16 20" fill="none" stroke="#fff" strokeWidth="1.200"><rect x="3" y="1" width="12" height="11" /><path d="M8 12v4M4 17h9" /><rect x="0.500" y="1" width="5" height="7" fill="#1c2c33" /></svg>
            </TrayCell>
            <TrayCell $w={36} $ml={16}><ImeChar>英</ImeChar></TrayCell>
            <TrayCell $w={24} $ml={2}><ImeBox>ㄅ</ImeBox></TrayCell>
            <TrayCell $w={80} $ml={9}><Clock>下午 02:13<br />2021/5/7</Clock></TrayCell>
            <TrayCell $w={40} $ml={7}>
              <svg width="16" height="18" viewBox="0 0 16 18"><path d="M0 0h16v13H6l-3 4v-4H0z" fill="#fff" /><path d="M3 3.500h10M3 6.500h10M3 9.500h10" stroke="#1c2c33" /></svg>
              <Badge>2</Badge>
            </TrayCell>
            <DesktopEdge />
          </Tray>
        </Taskbar>

        <ObsMain>
          <WinTitle $c="#8a8a8a">
            <ObsLogo size={15} /><span>OBS</span>
            <WinClose $r={18} $c="#9a9a9a"><X size={15} strokeWidth={1} /></WinClose>
          </WinTitle>
          <ObsMenu>檔案 (F)</ObsMenu>
          <ObsPreview />
          <ObsDock>
            <DockLeft>
              <DockHeader />
              <SceneList>
                <Scene>場景</Scene>
                <Scene>電腦螢幕</Scene>
                <Scene $sel>場景 2</Scene>
              </SceneList>
              <SceneTools><Plus size={18} strokeWidth={1.600} /><Minus size={18} strokeWidth={1.600} /></SceneTools>
            </DockLeft>
            <DockRight>
              <DockHeader>
                <svg width="13" height="13" viewBox="0 0 13 13" fill="none" stroke="#ddd"><rect x="0.500" y="0.500" width="8" height="7" fill="#464646" /><rect x="4.500" y="4.500" width="8" height="8" fill="#464646" /><path d="M1 1.500h7M5 5.500h7" stroke="#fff" strokeWidth="1.500" /></svg>
              </DockHeader>
              <ControlBtns>
                <ControlBtn>流</ControlBtn>
                <ControlBtn>製</ControlBtn>
                <ControlBtn>式</ControlBtn>
                <ControlBtn />
                <ControlBtn />
              </ControlBtns>
            </DockRight>
          </ObsDock>
        </ObsMain>

        <Settings>
          <WinTitle $pl={9}>
            <ObsLogo size={15} /><span>設定</span>
            <WinClose $r={11} $c="#111"><X size={15} strokeWidth={1.200} /></WinClose>
          </WinTitle>
          <SetBody>
            <SideBar>
              <SideItem><Gear /><SideLabel>一般</SideLabel></SideItem>
              <SideItem><Antenna /><SideLabel>串流</SideLabel></SideItem>
              <SideItem><Output /><SideLabel>輸出</SideLabel></SideItem>
              <SideItem><Speaker /><SideLabel>音效</SideLabel></SideItem>
              <SideItem><Monitor /><SideLabel>影像</SideLabel></SideItem>
              <SideItem><Keyboard /><SideLabel>快捷鍵</SideLabel></SideItem>
              <SideItem $active><Tools /><SideLabel>進階</SideLabel></SideItem>
            </SideBar>
            <ScrollArea>
              <Groups>
                <Group $h={100} $mt={-58} $pt={44}>
                  <Row>
                    <Label>色彩空間</Label>
                    <Field $gap={4}>
                      <Input $w={261} $bg="#4c4c4c">601<ComboArrow $sep><Chev w={7} h={4} /></ComboArrow></Input>
                      <Label style={{ width: 60 }}>色彩範圍</Label>
                      <Input $bg="#4c4c4c">部分<ComboArrow $sep><Chev w={7} h={4} /></ComboArrow></Input>
                    </Field>
                  </Row>
                </Group>

                <Group $h={136}>
                  <GroupTitle>錄影</GroupTitle>
                  <Row $mt={6}><Label>檔案名稱格式</Label><Field><Input>%CCYY-%MM-%DD %hh-%mm-%ss</Input></Field></Row>
                  <Row $h={22} $mt={3}><span /><Check><Box />如果檔案存在就覆寫</Check></Row>
                  <Row $h={22} $mt={4}><span /><Check><Box /><span>自動 <Lat>remux</Lat> 到 <Lat>mp4</Lat></span></Check></Row>
                  <Row $mt={7}>
                    <Label>重播緩衝檔案名稱前綴</Label>
                    <Field $gap={6}>
                      <Input $w={274}>Replay</Input>
                      <FieldText>後綴</FieldText>
                      <Input />
                    </Field>
                  </Row>
                </Group>

                <Group $h={107}>
                  <GroupTitle>實況延遲</GroupTitle>
                  <Row $h={22} $mt={3}><span /><Check><Box />啟用</Check></Row>
                  <Row $mt={4}>
                    <Label>持續時間</Label>
                    <Field>
                      <Input $w={63} $c="#707070">20 s</Input>
                      <SpinArrows off />
                      <FieldText $ml={6}>預計記憶體使用率: <Lat>6 MB</Lat></FieldText>
                    </Field>
                  </Row>
                  <Row $h={22} $mt={3}><span /><Check><Box $off><Tick c="#8a8a8a" /></Box>重新連線時維持截止點 (增加延遲)</Check></Row>
                </Group>

                <Group $h={83}>
                  <GroupTitle>自動重新連線</GroupTitle>
                  <Row $h={22} $mt={2}><span /><Check><Box><Tick /></Box>啟用</Check></Row>
                  <Row $mt={7}>
                    <Label>重試延遲</Label>
                    <Field>
                      <Input $w={232}>7 s</Input>
                      <SpinArrows />
                      <FieldText $ml={6} $mr={6}>最大嘗試次數</FieldText>
                      <Input>20</Input>
                      <SpinArrows />
                    </Field>
                  </Row>
                </Group>

                <Group $h={124}>
                  <GroupTitle>網路</GroupTitle>
                  <Row $h={19} $mt={5}>
                    <Label>綁定到 IP</Label>
                    <Field>
                      <Input $ls="-0.16px">
                        2001:288:6004:17:e1b6:f149:6342:e70c
                        <ComboDouble><Chev up w={7} h={4} /><Chev w={7} h={4} /></ComboDouble>
                      </Input>
                    </Field>
                    <Dropdown>
                      <DropItem $dim>2001:288:6004:17:e1b6:f149:6342:e70c</DropItem>
                      <DropItem><Zh>預設</Zh></DropItem>
                      <DropItem>[VirtualBox Host-Only Network #3] fe80::69cc:c343:b178:5b2c</DropItem>
                      <DropItem>[VirtualBox Host-Only Network #3] 192.168.56.101</DropItem>
                      <DropItem $sel>[<Zh>乙太網路</Zh> 2] 2001:288:6004:17:4cf2:925d:170d:387f</DropItem>
                      <DropItem>[<Zh>乙太網路</Zh> 2] 2001:288:6004:17:496b:9ef5:fb1d:11cf</DropItem>
                      <DropItem>[<Zh>乙太網路</Zh> 2] fe80::4cf2:925d:170d:387f</DropItem>
                      <DropItem>[<Zh>乙太網路</Zh> 2] 192.168.19.159</DropItem>
                    </Dropdown>
                  </Row>
                </Group>

                <Group $h={57}>
                  <GroupTitle>來源</GroupTitle>
                  <Row $h={22} $mt={3}><span /><Check><Box><Tick /></Box>啟用瀏覽器來源硬體加速</Check></Row>
                </Group>

                <Group $h={60}>
                  <GroupTitle>快捷鍵</GroupTitle>
                </Group>
              </Groups>
              <VScroll />
            </ScrollArea>
          </SetBody>
          <SetFooter>
            <FootBtn>確定</FootBtn>
            <FootBtn>取消</FootBtn>
            <FootBtn>套用</FootBtn>
          </SetFooter>
        </Settings>

        <Pointer width="15" height="23" viewBox="0 0 15 23"><path d="M1 1v18l4.500-4 3 7 3-1.300-3-6.700H14z" fill="#fff" stroke="#111" strokeWidth="1" /></Pointer>
      </Screen>
    </>
  );
}
